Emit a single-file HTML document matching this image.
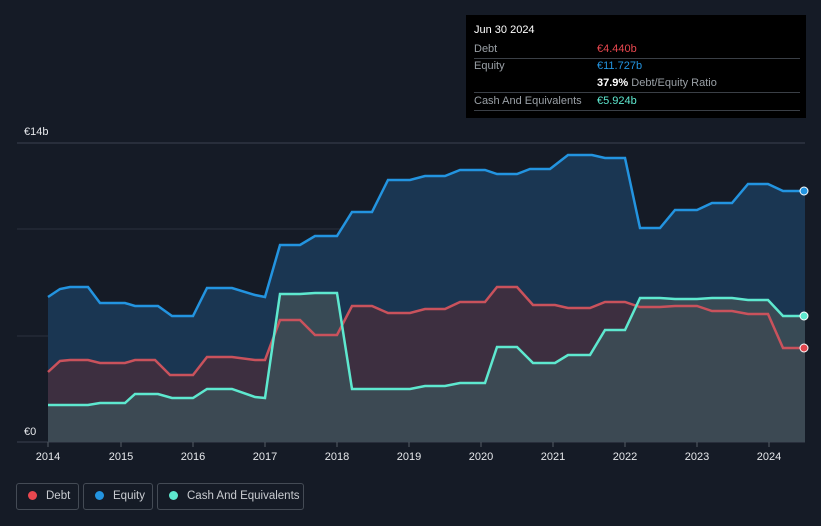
<!DOCTYPE html><html><head><style>
body{margin:0;background:#151b26;font-family:"Liberation Sans",sans-serif;width:821px;height:526px;overflow:hidden;position:relative}
.tt{position:absolute;left:466px;top:15px;width:340px;height:103px;background:#000;color:#fff;font-size:11px}
.row{position:absolute;left:8px;right:6px;border-bottom:1px solid #3a3f46;height:17px;line-height:17px}
.l{color:#9aa0a6;position:absolute;left:0}.v{position:absolute;left:123px}
.leg{position:absolute;top:483px;height:27px;border:1px solid #444b55;border-radius:3px;color:#c9ccd1;font-size:11.5px;line-height:25px;box-sizing:border-box;white-space:nowrap}
.dot{display:inline-block;width:9px;height:9px;border-radius:50%;margin:0 9px 0 11px;vertical-align:-1px}
.yr{position:absolute;top:451px;color:#e6e8eb;font-size:11px;width:40px;text-align:center;margin-left:-20px}
</style></head><body>
<svg width="821" height="526" style="position:absolute;left:0;top:0">
<line x1="17" y1="143" x2="805" y2="143" stroke="#3a4150"/>
<line x1="17" y1="229" x2="805" y2="229" stroke="#2a313d"/>
<line x1="17" y1="336" x2="805" y2="336" stroke="#2a313d"/>
<line x1="17" y1="442" x2="805" y2="442" stroke="#3a4150"/>
<path d="M48,297 L60,289 70,287 88,287 100,303 125,303 135,306 158,306 172,316 193,316 207,288 232,288 255,295 265,297 280,245 300,245 315,236 337,236 352,212 372,212 388,180 410,180 425,176 445,176 460,170 485,170 497,174 517,174 530,169 550,169 568,155 592,155 605,158 625,158 640,228 660,228 675,210 697,210 712,203 732,203 748,184 768,184 783,191 805,191 L805,442 48,442Z" fill="#1a3652"/>
<path d="M48,372 L60,361 70,360 88,360 100,363 125,363 135,360 155,360 170,375 193,375 207,357 232,357 255,360 265,360 280,320 300,320 315,335 337,335 352,306 372,306 388,313 410,313 425,309 445,309 460,302 485,302 497,287 517,287 533,305 555,305 568,308 590,308 605,302 625,302 640,307 660,307 675,306 697,306 712,311 732,311 748,314 768,314 783,348 805,348 L805,442 48,442Z" fill="#3d2f40"/>
<path d="M48,405 L60,405 88,405 100,403 125,403 135,394 158,394 172,398 193,398 207,389 232,389 255,397 265,398 280,294 300,294 315,293 337,293 352,389 372,389 388,389 410,389 425,386 445,386 460,383 485,383 497,347 517,347 533,363 555,363 568,355 590,355 605,330 625,330 640,298 660,298 675,299 697,299 712,298 732,298 748,300 768,300 783,316 805,316 L805,442 48,442Z" fill="#3c4c55" opacity="0.9"/>
<path d="M48,297 L60,289 70,287 88,287 100,303 125,303 135,306 158,306 172,316 193,316 207,288 232,288 255,295 265,297 280,245 300,245 315,236 337,236 352,212 372,212 388,180 410,180 425,176 445,176 460,170 485,170 497,174 517,174 530,169 550,169 568,155 592,155 605,158 625,158 640,228 660,228 675,210 697,210 712,203 732,203 748,184 768,184 783,191 805,191" fill="none" stroke="#2394e0" stroke-width="2.5"/>
<path d="M48,372 L60,361 70,360 88,360 100,363 125,363 135,360 155,360 170,375 193,375 207,357 232,357 255,360 265,360 280,320 300,320 315,335 337,335 352,306 372,306 388,313 410,313 425,309 445,309 460,302 485,302 497,287 517,287 533,305 555,305 568,308 590,308 605,302 625,302 640,307 660,307 675,306 697,306 712,311 732,311 748,314 768,314 783,348 805,348" fill="none" stroke="#c9525c" stroke-width="2.5"/>
<path d="M48,405 L60,405 88,405 100,403 125,403 135,394 158,394 172,398 193,398 207,389 232,389 255,397 265,398 280,294 300,294 315,293 337,293 352,389 372,389 388,389 410,389 425,386 445,386 460,383 485,383 497,347 517,347 533,363 555,363 568,355 590,355 605,330 625,330 640,298 660,298 675,299 697,299 712,298 732,298 748,300 768,300 783,316 805,316" fill="none" stroke="#5ee8cf" stroke-width="2.5"/>
<circle cx="804" cy="191" r="4" fill="#2394e0" stroke="#fff" stroke-width="1"/>
<circle cx="804" cy="348" r="4" fill="#e0464e" stroke="#fff" stroke-width="1"/>
<circle cx="804" cy="316" r="4" fill="#5ee8cf" stroke="#fff" stroke-width="1"/>
<g stroke="#555c66"><line x1="48" y1="442" x2="48" y2="447"/><line x1="121" y1="442" x2="121" y2="447"/><line x1="193" y1="442" x2="193" y2="447"/><line x1="265" y1="442" x2="265" y2="447"/><line x1="337" y1="442" x2="337" y2="447"/><line x1="409" y1="442" x2="409" y2="447"/><line x1="481" y1="442" x2="481" y2="447"/><line x1="553" y1="442" x2="553" y2="447"/><line x1="625" y1="442" x2="625" y2="447"/><line x1="697" y1="442" x2="697" y2="447"/><line x1="769" y1="442" x2="769" y2="447"/></g>
<text x="24" y="135" fill="#e6e8eb" font-size="11" font-family="Liberation Sans">€14b</text>
<text x="24" y="435" fill="#e6e8eb" font-size="11" font-family="Liberation Sans">€0</text>
</svg>
<div class="yr" style="left:48px">2014</div><div class="yr" style="left:121px">2015</div><div class="yr" style="left:193px">2016</div><div class="yr" style="left:265px">2017</div><div class="yr" style="left:337px">2018</div><div class="yr" style="left:409px">2019</div><div class="yr" style="left:481px">2020</div><div class="yr" style="left:553px">2021</div><div class="yr" style="left:625px">2022</div><div class="yr" style="left:697px">2023</div><div class="yr" style="left:769px">2024</div>
<div class="tt">
<div style="position:absolute;left:8px;top:9px;font-size:11px">Jun 30 2024</div>
<div class="row" style="top:26px"><span class="l">Debt</span><span class="v" style="color:#e8474f">€4.440b</span></div>
<div class="row" style="top:43px;border:none"><span class="l">Equity</span><span class="v" style="color:#2394e0">€11.727b</span></div>
<div class="row" style="top:60px"><span class="v"><b>37.9%</b> <span style="color:#9aa0a6">Debt/Equity Ratio</span></span></div>
<div class="row" style="top:78px"><span class="l">Cash And Equivalents</span><span class="v" style="color:#5ee8cf">€5.924b</span></div>
</div>
<div class="leg" style="left:16px;width:63px"><span class="dot" style="background:#e8474f"></span>Debt</div>
<div class="leg" style="left:83px;width:70px"><span class="dot" style="background:#2394e0"></span>Equity</div>
<div class="leg" style="left:157px;width:147px"><span class="dot" style="background:#5ee8cf"></span>Cash And Equivalents</div>
</body></html>
